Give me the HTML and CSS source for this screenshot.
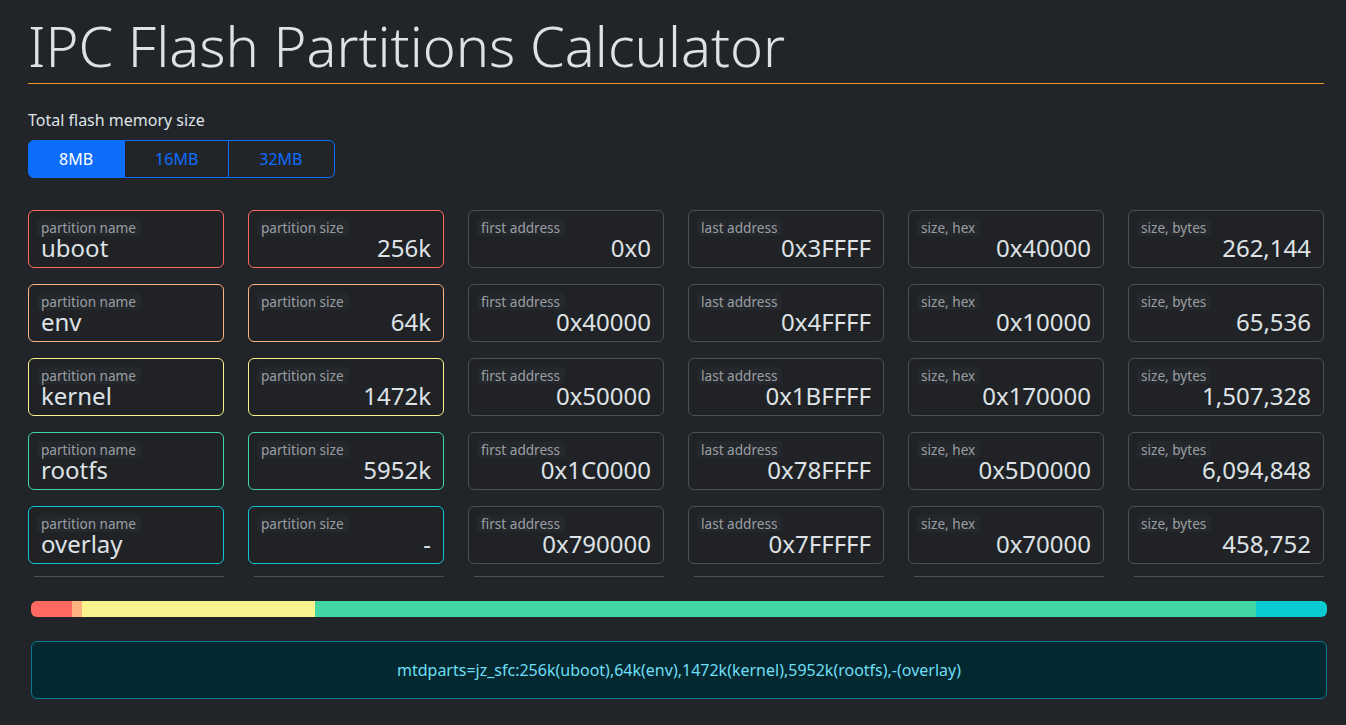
FILE: index.html
```html
<!DOCTYPE html>
<html lang="en">
<head>
<meta charset="utf-8">
<title>IPC Flash Partitions Calculator</title>
<link rel="stylesheet" href="styles.css">
</head>
<body>
<main class="container">
  <h1 class="title">IPC Flash Partitions Calculator</h1>

  <div class="flash-size">
    <div class="flash-label">Total flash memory size</div>
    <div class="btn-group">
      <button class="btn active">8MB</button>
      <button class="btn">16MB</button>
      <button class="btn">32MB</button>
    </div>
  </div>

  <div class="grid">
    <div class="field c-red"><span class="lbl">partition name</span><span class="val">uboot</span></div>
    <div class="field c-red"><span class="lbl">partition size</span><span class="val num">256k</span></div>
    <div class="field"><span class="lbl">first address</span><span class="val num">0x0</span></div>
    <div class="field"><span class="lbl">last address</span><span class="val num">0x3FFFF</span></div>
    <div class="field"><span class="lbl">size, hex</span><span class="val num">0x40000</span></div>
    <div class="field"><span class="lbl">size, bytes</span><span class="val num">262,144</span></div>

    <div class="field c-orange"><span class="lbl">partition name</span><span class="val">env</span></div>
    <div class="field c-orange"><span class="lbl">partition size</span><span class="val num">64k</span></div>
    <div class="field"><span class="lbl">first address</span><span class="val num">0x40000</span></div>
    <div class="field"><span class="lbl">last address</span><span class="val num">0x4FFFF</span></div>
    <div class="field"><span class="lbl">size, hex</span><span class="val num">0x10000</span></div>
    <div class="field"><span class="lbl">size, bytes</span><span class="val num">65,536</span></div>

    <div class="field c-yellow"><span class="lbl">partition name</span><span class="val">kernel</span></div>
    <div class="field c-yellow"><span class="lbl">partition size</span><span class="val num">1472k</span></div>
    <div class="field"><span class="lbl">first address</span><span class="val num">0x50000</span></div>
    <div class="field"><span class="lbl">last address</span><span class="val num">0x1BFFFF</span></div>
    <div class="field"><span class="lbl">size, hex</span><span class="val num">0x170000</span></div>
    <div class="field"><span class="lbl">size, bytes</span><span class="val num">1,507,328</span></div>

    <div class="field c-green"><span class="lbl">partition name</span><span class="val">rootfs</span></div>
    <div class="field c-green"><span class="lbl">partition size</span><span class="val num">5952k</span></div>
    <div class="field"><span class="lbl">first address</span><span class="val num">0x1C0000</span></div>
    <div class="field"><span class="lbl">last address</span><span class="val num">0x78FFFF</span></div>
    <div class="field"><span class="lbl">size, hex</span><span class="val num">0x5D0000</span></div>
    <div class="field"><span class="lbl">size, bytes</span><span class="val num">6,094,848</span></div>

    <div class="field c-cyan"><span class="lbl">partition name</span><span class="val">overlay</span></div>
    <div class="field c-cyan"><span class="lbl">partition size</span><span class="val num">-</span></div>
    <div class="field"><span class="lbl">first address</span><span class="val num">0x790000</span></div>
    <div class="field"><span class="lbl">last address</span><span class="val num">0x7FFFFF</span></div>
    <div class="field"><span class="lbl">size, hex</span><span class="val num">0x70000</span></div>
    <div class="field"><span class="lbl">size, bytes</span><span class="val num">458,752</span></div>
  </div>

  <div class="grid-rule">
    <div class="rule"></div><div class="rule"></div><div class="rule"></div>
    <div class="rule"></div><div class="rule"></div><div class="rule"></div>
  </div>

  <div class="progress">
    <div class="seg s-red" style="width:3.125%"></div>
    <div class="seg s-orange" style="width:0.78125%"></div>
    <div class="seg s-yellow" style="width:17.96875%"></div>
    <div class="seg s-green" style="width:72.65625%"></div>
    <div class="seg s-cyan" style="width:5.46875%"></div>
  </div>

  <div class="alert">mtdparts=jz_sfc:256k(uboot),64k(env),1472k(kernel),5952k(rootfs),-(overlay)</div>
</main>
</body>
</html>
```

FILE: styles.css
```css
* { box-sizing: border-box; }

html, body {
  margin: 0;
  padding: 0;
  background: #212529;
  color: #dee2e6;
  font-family: "Noto Sans", "Open Sans", sans-serif;
  font-size: 16px;
  line-height: 1.5;
}

.container {
  width: 1296px;
  margin-left: 28px;
}

.title {
  margin: 12px 0 0 0;
  padding-bottom: 4px;
  font-size: 56px;
  font-weight: 300;
  line-height: 1.2;
  color: #dee2e6;
  border-bottom: 1px solid #f0961e;
}

.flash-size {
  margin-top: 24px;
}

.flash-label {
  margin-bottom: 8px;
}

.btn-group {
  display: inline-flex;
}

.btn {
  font-family: inherit;
  font-size: 16px;
  line-height: 24px;
  padding: 6px 30px;
  border: 1px solid #0d6efd;
  background: transparent;
  color: #0d6efd;
  margin: 0;
  border-radius: 0;
}

.btn + .btn { margin-left: -1px; }

.btn:first-child { border-radius: 6px 0 0 6px; padding-right: 31px; }
.btn:last-child { border-radius: 0 6px 6px 0; padding-right: 31px; }

.btn.active {
  background: #0d6efd;
  color: #fff;
}

.grid {
  margin-top: 32px;
  display: grid;
  grid-template-columns: repeat(6, 196px);
  column-gap: 24px;
  row-gap: 16px;
}

.field {
  height: 58px;
  border: 1px solid #495057;
  border-radius: 6px;
  background: #202225;
  padding: 8px 12px 0 12px;
  display: flex;
  flex-direction: column;
}

.lbl {
  align-self: flex-start;
  font-size: 13.6px;
  line-height: 17px;
  color: rgba(222, 226, 230, 0.65);
  background: #24272b;
  padding: 0 5px 0 4px;
  margin-left: -4px;
  border-radius: 3px;
}

.val {
  font-size: 24px;
  line-height: 24px;
  color: #dee2e6;
  white-space: nowrap;
}

.val.num {
  text-align: right;
}

.c-red { border-color: #ff6961; }
.c-orange { border-color: #ffb480; }
.c-yellow { border-color: #f8f38d; }
.c-green { border-color: #42d6a4; }
.c-cyan { border-color: #08cad1; }

.grid-rule {
  margin-top: 12px;
  display: grid;
  grid-template-columns: repeat(6, 196px);
  column-gap: 24px;
}

.rule {
  height: 1px;
  margin-left: 6px;
  background: #4b5056;
}

.progress {
  margin-top: 24px;
  margin-left: 3px;
  width: 1296px;
  height: 16px;
  display: flex;
  border-radius: 6px;
  overflow: hidden;
  background: #343a40;
}

.seg { height: 100%; }
.s-red { background: #ff6961; }
.s-orange { background: #ffb480; }
.s-yellow { background: #f8f38d; }
.s-green { background: #42d6a4; }
.s-cyan { background: #08cad1; }

.alert {
  margin-top: 24px;
  margin-left: 3px;
  width: 1296px;
  padding: 16px;
  border: 1px solid #087990;
  border-radius: 6px;
  background: #032830;
  color: #6edff6;
  text-align: center;
  line-height: 24px;
}
```
